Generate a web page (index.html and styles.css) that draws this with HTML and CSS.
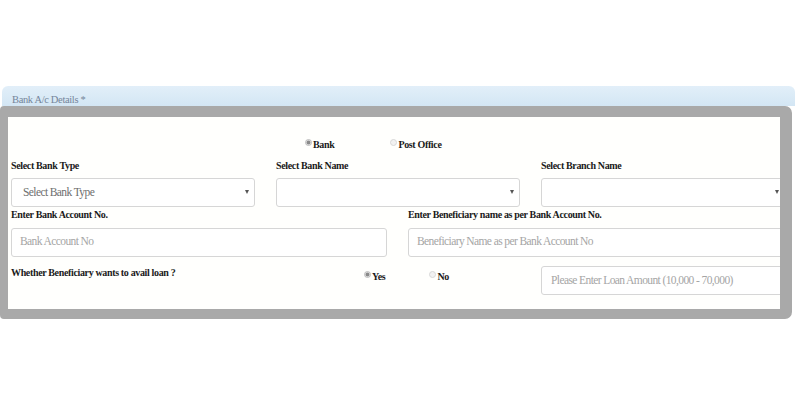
FILE: index.html
```html
<!DOCTYPE html>
<html>
<head>
<meta charset="utf-8">
<link rel="stylesheet" href="styles.css">
</head>
<body>
<div class="panel">
  <div class="panel-head">Bank A/c Details *</div>
  <div class="frame">
    <div class="inner">
      <div class="radio-row">
        <span class="opt"><span class="radio checked"></span>Bank</span>
        <span class="opt"><span class="radio"></span>Post Office</span>
      </div>
      <div class="grid3">
        <div class="field">
          <div class="label">Select Bank Type</div>
          <div class="control select"><span class="ph dark">Select Bank Type</span><span class="arrow"></span></div>
        </div>
        <div class="field">
          <div class="label">Select Bank Name</div>
          <div class="control select"><span class="ph"></span><span class="arrow"></span></div>
        </div>
        <div class="field">
          <div class="label">Select Branch Name</div>
          <div class="control select"><span class="ph"></span><span class="arrow"></span></div>
        </div>
      </div>
      <div class="grid2">
        <div class="field">
          <div class="label">Enter Bank Account No.</div>
          <div class="control input"><span class="ph">Bank Account No</span></div>
        </div>
        <div class="field">
          <div class="label">Enter Beneficiary name as per Bank Account No.</div>
          <div class="control input"><span class="ph">Beneficiary Name as per Bank Account No</span></div>
        </div>
      </div>
      <div class="grid3 loan-row">
        <div class="label loan-label">Whether Beneficiary wants to avail loan ?</div>
        <div class="loan-opts">
          <span class="opt"><span class="radio checked"></span>Yes</span>
          <span class="opt"><span class="radio"></span>No</span>
        </div>
        <div class="control input"><span class="ph">Please Enter Loan Amount (10,000 - 70,000)</span></div>
      </div>
    </div>
  </div>
</div>
</body>
</html>
```
FILE: styles.css
```css
html, body {
  margin: 0;
  padding: 0;
  background: #ffffff;
}
body {
  font-family: "Liberation Serif", "Times New Roman", serif;
  color: #1a1a1a;
}
.panel {
  margin-top: 86px;
  width: 795px;
}
.panel-head {
  margin-left: 2px;
  height: 20px;
  overflow: hidden;
  background: linear-gradient(#e2eff9, #d3e6f4);
  border-radius: 6px 6px 0 0;
  padding-left: 10px;
  box-sizing: border-box;
  font-size: 10.5px;
  letter-spacing: -0.35px;
  line-height: 11px;
  padding-top: 8px;
  color: #75859a;
}
.frame {
  width: 792px;
  box-sizing: border-box;
  border-style: solid;
  border-color: #a9a9a9;
  border-width: 11px 12px 10px 8px;
  border-radius: 4px 7px 7px 4px;
  background: #fffffd;
}
.inner {
  overflow: hidden;
  padding: 22px 0 14px 3px;
}
.radio-row {
  display: flex;
  gap: 56px;
  padding-left: 294px;
  height: 12px;
  line-height: 12px;
}
.opt {
  display: inline-flex;
  align-items: flex-start;
  font-size: 10px;
  letter-spacing: -0.35px;
  font-weight: bold;
  color: #1a1a1a;
  white-space: nowrap;
}
.radio {
  display: inline-block;
  width: 7px;
  height: 7px;
  border-radius: 50%;
  background: #f2f2f2;
  border: 1px solid #d8d8d8;
  box-sizing: border-box;
  margin-right: 1px;
}
.radio.checked {
  background: radial-gradient(circle, #8a8a8a 0 1.6px, #dcdcdc 2.2px);
  border-color: #bcbcbc;
}
.grid3 {
  display: grid;
  grid-template-columns: 244px 244px 244px;
  column-gap: 21px;
  margin-top: 9px;
}
.grid2 {
  display: grid;
  grid-template-columns: 376px 376px;
  column-gap: 21px;
  margin-top: 2px;
}
.label {
  font-size: 10px;
  letter-spacing: -0.35px;
  font-weight: bold;
  line-height: 12px;
  height: 12px;
  white-space: nowrap;
  color: #1a1a1a;
}
.control {
  box-sizing: border-box;
  height: 29px;
  border: 1px solid #d6d6d6;
  border-radius: 3px;
  background: #fff;
  display: flex;
  align-items: center;
  justify-content: space-between;
  padding-bottom: 3px;
}
.grid3 .control.select {
  margin-top: 6px;
  padding-left: 11px;
  padding-right: 5px;
  padding-bottom: 1px;
}
.grid2 .control {
  margin-top: 7px;
  padding-left: 8px;
}
.ph {
  font-size: 11.5px;
  letter-spacing: -0.6px;
  color: #a5a5a5;
  white-space: nowrap;
}
.ph.dark {
  color: #6e6e6e;
}
.arrow {
  width: 0;
  height: 0;
  border-left: 2px solid transparent;
  border-right: 2px solid transparent;
  border-top: 4px solid #555;
}
.loan-row {
  margin-top: 9px;
}
.loan-label {
  margin-top: 1px;
}
.loan-opts {
  display: flex;
  gap: 44px;
  padding-left: 88px;
  padding-top: 5px;
}
.loan-row .control {
  padding-left: 9px;
  padding-bottom: 1px;
}
```
